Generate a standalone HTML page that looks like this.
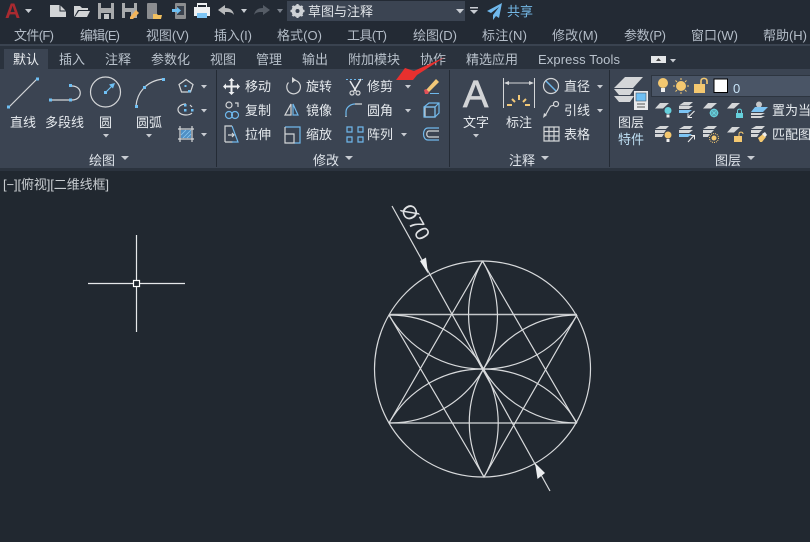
<!DOCTYPE html>
<html><head><meta charset="utf-8"><style>
html,body{margin:0;padding:0;background:#212830;width:810px;height:542px;overflow:hidden}
svg{display:block}
text{font-family:"Liberation Sans","Noto Sans CJK SC",sans-serif}
.m{font-size:13px;fill:#b4bdc8}
.tb{font-size:13px;fill:#b9c2cc}
.t{font-size:13px;fill:#e6eaee}
.p{font-size:13px;fill:#dfe4ea}
.n{fill:#6fc0f4}
.l{fill:none;stroke:#d4d6d8;stroke-width:1.2}
.b{fill:none;stroke:#6fb8ec;stroke-width:1.2}
.g{fill:#d2d4d6}
.s{fill:#d4d6d8}
.tri{fill:#c8ccd2}
</style></head><body>
<svg width="810" height="542" viewBox="0 0 810 542" xmlns="http://www.w3.org/2000/svg">
<rect width="810" height="542" fill="#212830"/>
<rect width="810" height="44" fill="#232a34"/>
<rect y="44" width="810" height="2" fill="#3a4350"/>
<rect y="46" width="810" height="23" fill="#2a323d"/>
<rect y="69" width="810" height="99" fill="#3b4452"/>
<rect y="168" width="810" height="3" fill="#2b333e"/>
<rect x="4" y="49" width="44" height="20" fill="#3b4452"/>

<!-- Quick access -->
<text x="5" y="18" font-size="21" font-weight="bold" fill="#a92a30" style="font-family:'Liberation Sans',sans-serif">A</text>
<path class="tri" d="M25 9h7l-3.500 4z"/>
<path class="g" d="M50 5h10l6 6v6H50z"/><path d="M60 5v6h6" fill="none" stroke="#232a34"/>
<path class="g" d="M74 8v-2h6l2 2h6v2H78l-4 7z"/><path class="g" d="M79 11h11l-3 6H75z"/>
<path fill="#a8aaac" d="M98 3h16v16H98z"/><path fill="#232a34" d="M101 3h10v5h-10z M101 13h10v6h-10z"/><path fill="#c4c6c8" d="M104 14h5v5h-5z"/>
<path fill="#a8aaac" d="M122 3h15v15h-15z"/><path fill="#232a34" d="M125 3h9v5h-9z M125 12h6v6h-6z"/><path fill="#f3b45a" d="M130 17l6-7 3 3-6 6h-3z"/>
<rect x="147" y="3" width="10" height="16" rx="1" fill="#8b8d90"/><path fill="#f2c05f" d="M153 14h4l1 1h4l-1 4h-8z"/>
<rect x="175" y="3" width="11" height="16" rx="1" fill="#8b8d90"/><rect x="177" y="6" width="7" height="9" fill="#3a424e"/><path fill="#6fc0f4" d="M172 9h5v-2l4 3.500-4 3.500v-2h-5z"/>
<path fill="#eef0f2" d="M197 3h10v4h3v9h-3v-2h-10v2h-3V7h3z"/><rect x="198" y="5" width="8" height="2" fill="#232a34"/><rect x="197" y="13" width="10" height="5" fill="#7cc4f4"/>
<path fill="#b8babc" d="M218 10l7-5v3c5 0 8 2 9 7-2-3-5-3-9-3v3z"/>
<path class="tri" d="M241 9h6l-3 4z"/>
<path fill="#555c66" d="M270 10l-7-5v3c-5 0-8 2-9 7 2-3 5-3 9-3v3z"/>
<path fill="#7b828c" d="M277 9h6l-3 4z"/>

<!-- Workspace -->
<rect x="287" y="1" width="178" height="20" fill="#3b4452"/>
<circle cx="297.500" cy="11" r="4.500" fill="none" stroke="#cfd2d6" stroke-width="3"/>
<path stroke="#cfd2d6" stroke-width="2.200" d="M297.500 4v14M290.500 11h14M292.500 6l10 10M302.500 6l-10 10"/>
<circle cx="297.500" cy="11" r="2" fill="#3b4452"/>
<text x="308" y="16" font-size="13" fill="#e0e4e8">草图与注释</text>
<path class="tri" d="M456 9h8l-4 4.500z"/>
<path class="tri" d="M470 7h8v1.500h-8zM470 10h8l-4 4z"/>
<path fill="#6fb8ec" d="M502 3l-15 8 4 2 8-6-6 8v5l3-4 3 2z"/>
<text x="507" y="16" font-size="13" fill="#74b8e6">共享</text>

<!-- Menu -->
<text class="m" x="14" y="40" textLength="40">文件(F)</text>
<text class="m" x="80" y="40" textLength="40">编辑(E)</text>
<text class="m" x="146" y="40" textLength="43">视图(V)</text>
<text class="m" x="214" y="40" textLength="38">插入(I)</text>
<text class="m" x="277" y="40" textLength="45">格式(O)</text>
<text class="m" x="347" y="40" textLength="40">工具(T)</text>
<text class="m" x="413" y="40" textLength="44">绘图(D)</text>
<text class="m" x="482" y="40" textLength="45">标注(N)</text>
<text class="m" x="552" y="40" textLength="46">修改(M)</text>
<text class="m" x="624" y="40" textLength="42">参数(P)</text>
<text class="m" x="691" y="40" textLength="47">窗口(W)</text>
<text class="m" x="763" y="40" textLength="44">帮助(H)</text>

<!-- Tabs -->
<text x="13" y="64" font-size="13" fill="#eceff2">默认</text>
<text class="tb" x="59" y="64">插入</text>
<text class="tb" x="105" y="64">注释</text>
<text class="tb" x="151" y="64">参数化</text>
<text class="tb" x="210" y="64">视图</text>
<text class="tb" x="256" y="64">管理</text>
<text class="tb" x="302" y="64">输出</text>
<text class="tb" x="348" y="64">附加模块</text>
<text class="tb" x="420" y="64">协作</text>
<text class="tb" x="466" y="64">精选应用</text>
<text class="tb" x="538" y="64" textLength="82">Express Tools</text>
<rect x="651" y="56" width="15" height="7" fill="#e4e6e8"/><path fill="#444" d="M656 61h5l-2.500-3z"/>
<path class="tri" d="M670 59h6l-3 3.500z"/>

<!-- separators -->
<rect x="216" y="70" width="1" height="97" fill="#242b35"/>
<rect x="449" y="70" width="1" height="97" fill="#242b35"/>
<rect x="609" y="70" width="1" height="97" fill="#242b35"/>

<!-- Draw panel -->
<path class="l" d="M9 107L37 79"/>
<rect class="n" x="7" y="105.500" width="3" height="3"/><rect class="n" x="36" y="77.500" width="3" height="3"/>
<path class="l" d="M52 100h19M72 86c11 0 11 14 0 14"/>
<rect class="n" x="49" y="98.500" width="3" height="3"/><rect class="n" x="69" y="98.500" width="3" height="3"/><rect class="n" x="69" y="84" width="3" height="3"/>
<circle class="l" cx="105.500" cy="92" r="15"/>
<path stroke="#6fc0f4" stroke-width="1.200" d="M106 92l7-7"/><path class="n" d="M115 83l-6 1.500 4 4z"/><rect class="n" x="104" y="91" width="3" height="3"/>
<path class="l" d="M136 106c1-13 10-25 27-27"/>
<rect class="n" x="135" y="105" width="3" height="3"/><rect class="n" x="143" y="86" width="3" height="3"/><rect class="n" x="162" y="78" width="3" height="3"/>
<text class="t" x="10" y="127">直线</text>
<text class="t" x="45" y="127">多段线</text>
<text class="t" x="99" y="127">圆</text>
<text class="t" x="136" y="127">圆弧</text>
<path class="tri" d="M103 134h6l-3 3.500z"/><path class="tri" d="M146 134h6l-3 3.500z"/>
<path class="l" d="M186 79.500l7 5-2.500 7.500h-9l-2.500-7.500z"/><rect class="n" x="188" y="90" width="2.500" height="2.500"/><rect class="n" x="184.500" y="85" width="2" height="2"/>
<path class="tri" d="M201 85h6l-3 3.500z"/>
<path class="l" d="M186 104c-5 0-8 3-8 5.500 0 3 3 5.500 8 5.500 3 0 5-1 6-2" stroke-dasharray="none"/><path class="l" d="M190 105l2 2"/><rect class="n" x="184" y="104" width="2.500" height="2.500"/><rect class="n" x="184" y="109" width="2.500" height="2.500"/><rect class="n" x="191" y="109" width="2.500" height="2.500"/>
<path class="tri" d="M201 109h6l-3 3.500z"/>
<path class="l" d="M178 129h16M178 139h16M180 126v16M192 126v16"/><rect x="181" y="130" width="10" height="8" fill="#4f8fc4"/><path stroke="#8cc8f0" stroke-width=".8" d="M181 135l5-5M183 138l8-8M187 138l4-4"/>
<path class="tri" d="M201 133h6l-3 3.500z"/>
<text class="p" x="89" y="165">绘图</text><path class="tri" d="M121 156h8l-4 4z"/>

<!-- Modify panel -->
<path fill="#eef0f2" d="M231.500 78l3 3h-2v4.500H237v-2l3 3-3 3v-2h-4.500V92h2l-3 3-3-3h2v-4.500H226v2l-3-3 3-3v2h4.500V81h-2z"/>
<circle class="l" cx="229" cy="105" r="3"/><path class="l" d="M235 103h3v4"/><circle class="b" cx="229" cy="115" r="3.500"/><circle class="b" cx="235" cy="115" r="3.500"/>
<path class="l" d="M225 142v-16h7M225 142h8"/><path class="b" d="M232 126l6 16h-6"/><path class="l" d="M228 135h6M232 133l2 2-2 2"/>
<text class="t" x="245" y="91">移动</text><text class="t" x="245" y="115">复制</text><text class="t" x="245" y="139">拉伸</text>
<path class="l" d="M288.500 82.500a6.800 6.800 0 1 0 5-2.300"/><path class="s" d="M296 80l-4-3v6z"/>
<path class="l" d="M285 115l6-11v11z"/><path class="b" d="M293 104v11h5z"/>
<path class="b" d="M285 127h15v16h-6"/><path class="l" d="M285 127v16h9v-9h-9"/>
<text class="t" x="306" y="91">旋转</text><text class="t" x="306" y="115">镜像</text><text class="t" x="306" y="139">缩放</text>
<path stroke="#6fb8ec" stroke-dasharray="2 2" stroke-width="1" d="M346 79.500h17"/>
<path stroke="#e8eaec" stroke-width="1.500" d="M350 81l6 10M361 79l-7 12"/><circle class="l" cx="352" cy="93" r="2"/><circle class="l" cx="358" cy="93" r="2"/>
<path class="b" d="M346 117v-5c0-5 5-8 9-8"/><path class="l" d="M355 104h7M346 117v-1"/>
<path class="b" d="M347 127h5v5h-5zM358 127h5v5h-5zM347 137h5v5h-5zM358 137h5v5h-5z"/>
<text class="t" x="367" y="91">修剪</text><text class="t" x="367" y="115">圆角</text><text class="t" x="367" y="139">阵列</text>
<path class="tri" d="M405 85h6l-3 3.500z"/><path class="tri" d="M405 109h6l-3 3.500z"/><path class="tri" d="M401 133h6l-3 3.500z"/>
<path fill="#f2c878" d="M426 90l10-11 3 3-10 10z"/><path fill="#e05058" d="M424 90l2-1 3 3-1 2h-3z"/><path stroke="#6fb8ec" d="M430 93.500h9"/>
<path class="l" d="M425 107h10v10h-10z"/><path class="b" d="M424 107h11v10h-11zM424 107l5-4h10v10l-4 4M435 107l4-4"/>
<path class="b" d="M439 128h-11c-6 0-6 12 0 12h11"/><path class="l" d="M439 131h-10c-3 0-3 6 0 6h10"/>
<text class="p" x="313" y="165">修改</text><path class="tri" d="M345 156h8l-4 4z"/>

<!-- red arrow -->
<path fill="#e8302e" d="M396 80L405 68l9 3 31-14-28 18-4 5z"/>

<!-- Annotation panel -->
<text x="463" y="107" font-size="38" fill="#d2d4d6" stroke="#d2d4d6" stroke-width=".7">A</text>
<path stroke="#d4d6d8" stroke-width="1" fill="none" d="M503.500 78v30M534.500 78v30M505 83h28"/>
<path fill="#d4d6d8" d="M504 83l5-2v4zM534 83l-5-2v4z"/>
<path stroke="#f2c878" stroke-width="2" d="M507 105h5M530 105h-5M512 99l3 3M526 99l-3 3M519 95v5"/>
<text class="t" x="463" y="127">文字</text>
<text class="t" x="506" y="127">标注</text>
<path class="tri" d="M473 134h6l-3 3.500z"/>
<circle class="l" cx="551" cy="86" r="7.500"/><path stroke="#6fb8ec" stroke-width="1.400" d="M546 81l10 10"/>
<path class="l" d="M545 116l5-9c1-2 3-1 4-2"/><circle class="l" cx="556" cy="104" r="2.500"/><path fill="#d4d6d8" d="M543 118l1-5 3 2z"/>
<path class="l" d="M544 127h15v14h-15zM544 131.500h15M544 136h15M549 127v14M554 127v14"/>
<text class="t" x="564" y="91">直径</text><text class="t" x="564" y="115">引线</text><text class="t" x="564" y="139">表格</text>
<path class="tri" d="M597 85h6l-3 3.500z"/><path class="tri" d="M597 109h6l-3 3.500z"/>
<text class="p" x="509" y="165">注释</text><path class="tri" d="M541 156h8l-4 4z"/>

<!-- Layers panel -->
<path class="s" d="M625 77h18l-10 11h-19z"/>
<path class="s" d="M614 89h20l-4 6h-11z"/>
<path class="s" d="M614 96h20l-4 6h-11z"/>
<rect x="634" y="91" width="14" height="19" fill="#e8eaec"/>
<rect x="636" y="93" width="10" height="8" fill="#6fc0f4" stroke="#456" stroke-width=".6"/><path stroke="#555" fill="none" d="M637 104h8M637 107h8"/>
<text class="t" x="618" y="127">图层</text><text x="618" y="144" font-size="13" fill="#bfe0f4">特件</text>

<rect x="651" y="75" width="159" height="22" fill="#4a5566"/><rect x="651.500" y="75.500" width="160" height="21" fill="none" stroke="#2d3540"/>
<circle cx="663" cy="83" r="5" fill="#f4c870"/><path fill="#eee" d="M661 88h4v4h-4z"/>
<circle cx="681" cy="86" r="5" fill="#f4c870"/><path stroke="#f4c870" d="M681 78v2M681 92v2M673 86h2M687 86h2M675.500 80.500l1.500 1.500M686.500 80.500l-1.500 1.500M675.500 91.500l1.500-1.500M686.500 91.500l-1.500-1.500"/>
<rect x="694" y="84" width="11" height="9" fill="#f4c870"/><path fill="none" stroke="#f4c870" stroke-width="1.600" d="M701 84v-3c0-3.500 6-3.500 6 0v3"/>
<rect x="714" y="79" width="13.500" height="13.500" fill="#fff" stroke="#000"/>
<text x="733" y="93" font-size="13" fill="#c8e4f8">0</text>

<!-- row 1 -->
<path class="s" d="M660 103h9l-6 5.500h-8z"/><circle cx="668" cy="110.500" r="3.500" fill="#66d0dc"/><rect x="666.500" y="114.500" width="3" height="3" fill="#eee"/>
<path class="s" d="M684 102h9l-4 3.500h-10z"/><path class="s" d="M679 106h14l-4 3h-10z"/><path fill="#7cc4f4" d="M679 110h13l-4 3h-9z"/><path stroke="#eee" fill="none" d="M694.500 111l-6.500 6.500M688 113.500v4h4"/>
<path class="s" d="M708 103h9l-6 5.500h-8z"/><circle cx="714" cy="113" r="3.500" fill="none" stroke="#66d0dc" stroke-width="1.500"/><path stroke="#66d0dc" d="M709.500 113h9M714 108.500v9M711 110l6 6M717 110l-6 6"/>
<path class="s" d="M732 103h8l-6 5.500h-7z"/><rect x="736" y="113" width="7" height="5" fill="#66d0dc"/><path fill="none" stroke="#66d0dc" d="M737.500 113v-2c0-2.500 4-2.500 4 0v2"/>
<circle cx="759" cy="104.500" r="3" fill="#c4c6c8"/><path fill="#7cc4f4" d="M755 107h13l-5 5h-12z"/><path class="s" d="M751 113h14l-4 2h-10zM751 116h14l-4 2h-10z"/>

<!-- row 2 -->
<path class="s" d="M660 126h9l-3 3h-11zM655 130h11l-2 3h-9zM655 134h9l-2 3h-7z"/><circle cx="668" cy="135" r="3.500" fill="#f4c870"/><rect x="666.500" y="139" width="3" height="3" fill="#eee"/>
<path class="s" d="M684 126h9l-3 3h-11zM679 130h14l-4 3h-10z"/><path fill="#7cc4f4" d="M679 134h13l-4 3h-9z"/><path stroke="#eee" fill="none" d="M688 142l6-6.500M690.500 135.500h4v4"/>
<path class="s" d="M708 126h9l-3 3h-11zM703 130h11l-3 3h-8zM703 134h7l-2 3h-5z"/><circle cx="714" cy="138" r="2.500" fill="#f4c870"/><circle cx="714" cy="138" r="4.500" fill="none" stroke="#f4c870" stroke-dasharray="1 1"/>
<path class="s" d="M732 127h8l-6 5.500h-7z"/><rect x="734" y="136" width="8" height="6" fill="#f4c870"/><path fill="none" stroke="#f4c870" d="M739 136v-2c0-2.500 4-2.500 4 0"/>
<path class="s" d="M756 126h9l-3 3h-11zM751 130h11l-3 3h-8zM751 134h8l-2 3h-6z"/><path fill="#f4c870" d="M758 138l5-4 3 3-4 5h-2z"/><path fill="#eee" d="M762 134l3-2 2 3-2 2z"/>

<text class="t" x="772" y="115">置为当前</text>
<text class="t" x="772" y="139">匹配图层</text>
<text class="p" x="715" y="165">图层</text><path class="tri" d="M747 156h8l-4 4z"/>

<!-- Canvas -->
<text x="3" y="189" font-size="13" fill="#c8ccd0" textLength="106">[−][俯视][二维线框]</text>
<path stroke="#e6e8ea" stroke-width="1.200" d="M88 283.500h45M140 283.500h45M136.500 235v45M136.500 287v45"/>
<rect x="133.500" y="280.500" width="6" height="6" fill="none" stroke="#fff" stroke-width="1.200"/>

<g fill="none" stroke="#d8dadc" stroke-width="1.200">
<circle cx="482.500" cy="369" r="108"/>
<path d="M389 314.500H577" stroke-width="1.500" stroke="#c4c7ca"/>
<path d="M389 423H577"/>
<path d="M482.500 261L576.500 423M484 477L577 315M482.500 261L389 423M484 477L389 315"/>
<path d="M392 206L550 491"/>
<path d="M482.500 261A108 108 0 0 0 483.500 369A108 108 0 0 0 482.500 261"/>
<path d="M483.500 369A108 108 0 0 0 484 477A108 108 0 0 0 483.500 369"/>
<path d="M389 315A108 108 0 0 0 483.500 369A108 108 0 0 0 389 315"/>
<path d="M577 315A108 108 0 0 0 483.500 369A108 108 0 0 0 577 315"/>
<path d="M389 423A108 108 0 0 0 483.500 369A108 108 0 0 0 389 423"/>
<path d="M577 423A108 108 0 0 0 483.500 369A108 108 0 0 0 577 423"/>
</g>
<path fill="#eceef0" d="M428 273.500L420 261L426 257.500z"/>
<path fill="#eceef0" d="M535 463L545 473L537.500 479z"/>
<text transform="translate(400 209) rotate(60)" font-size="20" fill="#e0e2e4" style="font-family:'Liberation Sans',sans-serif">Ø70</text>
</svg>
</body></html>
